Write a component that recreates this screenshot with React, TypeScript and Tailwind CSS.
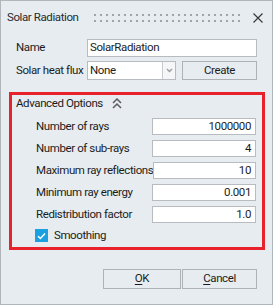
import React from "react";

const rows = [
  { label: "Number of rays", value: "1000000" },
  { label: "Number of sub-rays", value: "4" },
  { label: "Maximum ray reflections", value: "10" },
  { label: "Minimum ray energy", value: "0.001" },
  { label: "Redistribution factor", value: "1.0" },
];

function Grip() {
  const dots = [];
  for (let i = 0; i < 25; i++) {
    dots.push(<rect key={"a" + i} x={i * 6} y={0} width={2} height={2} fill="#9ea4a9" />);
    dots.push(<rect key={"b" + i} x={i * 6} y={6} width={2} height={2} fill="#9ea4a9" />);
  }
  return (
    <svg width="149" height="8" className="ml-auto mr-[10px]">
      {dots}
    </svg>
  );
}

export default function App() {
  return (
    <div className="w-[273px] h-[305px] overflow-hidden border border-[#b1b6ba] bg-[#e6ecf0] text-[11.5px] tracking-[-0.4px] leading-none text-[#1c1c1c] font-['Roboto',sans-serif]">
      {/* Title bar */}
      <div className="flex h-[33px] items-center pl-[6px] pr-[9px]">
        <span className="text-[#262b33]">Solar Radiation</span>
        <Grip />
        <svg width="10" height="10" viewBox="0 0 10 10">
          <path d="M0.5 0.5L9.5 9.5M9.5 0.5L0.5 9.5" stroke="#3a3a3a" strokeWidth="1.2" />
        </svg>
      </div>

      {/* Name / flux */}
      <div className="px-[15px] pt-[5px]">
        <div className="flex h-[18px] items-center">
          <span className="w-[71px]">Name</span>
          <div className="flex h-[18px] flex-1 items-center border border-[#b8bcc0] bg-white pl-[2px]">
            SolarRadiation
          </div>
        </div>
        <div className="mt-[4px] flex h-[19px] items-center">
          <span className="w-[71px] whitespace-nowrap">Solar heat flux</span>
          <div className="flex h-[19px] w-[89px] border border-[#b8bcc0] bg-white">
            <div className="flex flex-1 items-center pl-[2px]">None</div>
            <div className="flex w-[13px] items-center justify-center border-l border-[#c9cdd0] bg-[#f4f6f7]">
              <svg width="7" height="5" viewBox="0 0 7 5">
                <path d="M1 1L3.5 3.5L6 1" stroke="#9a9a9a" strokeWidth="1.3" fill="none" />
              </svg>
            </div>
          </div>
          <button className="ml-[6px] h-[19px] w-[75px] border border-[#adb2b6] bg-[#e6ecf0]">
            Create
          </button>
        </div>
      </div>

      {/* Advanced options */}
      <div className="ml-[8px] mr-[7px] mt-[12px] h-[158px] border-[3px] border-[#e8222b]">
        <div className="flex h-[18px] items-center pl-[4px]">
          <span>Advanced Options</span>
          <svg width="10" height="12" viewBox="0 0 10 12" className="ml-[9px]">
            <path d="M1 5L5 1L9 5M1 10L5 6L9 10" stroke="#5c5c5c" strokeWidth="1.5" fill="none" />
          </svg>
        </div>
        <div className="mt-[5px] flex flex-col gap-[5px] pl-[24px] pr-[6px]">
          {rows.map((r) => (
            <div key={r.label} className="flex h-[17px] items-center justify-between">
              <span className="whitespace-nowrap">{r.label}</span>
              <div className="flex h-[17px] w-[104px] items-center justify-end border border-[#b8bcc0] bg-white pr-[4px]">
                {r.value}
              </div>
            </div>
          ))}
        </div>
        <div className="mt-[6px] flex h-[13px] items-center pl-[23px]">
          <div className="flex h-[13px] w-[13px] items-center justify-center bg-[#1ba0e1]">
            <svg width="9" height="8" viewBox="0 0 9 8">
              <path d="M1 4.2L3.4 6.4L8 1.4" stroke="white" strokeWidth="1.5" fill="none" />
            </svg>
          </div>
          <span className="ml-[6px]">Smoothing</span>
        </div>
      </div>

      {/* Buttons */}
      <div className="mt-[19px] flex justify-end gap-[1px] pr-[15px]">
        <button className="h-[20px] w-[78px] border border-[#adb2b6] bg-[#e6ecf0]">
          <span className="underline underline-offset-2">O</span>K
        </button>
        <button className="h-[20px] w-[75px] border border-[#adb2b6] bg-[#e6ecf0]">
          <span className="underline underline-offset-2">C</span>ancel
        </button>
      </div>
    </div>
  );
}
